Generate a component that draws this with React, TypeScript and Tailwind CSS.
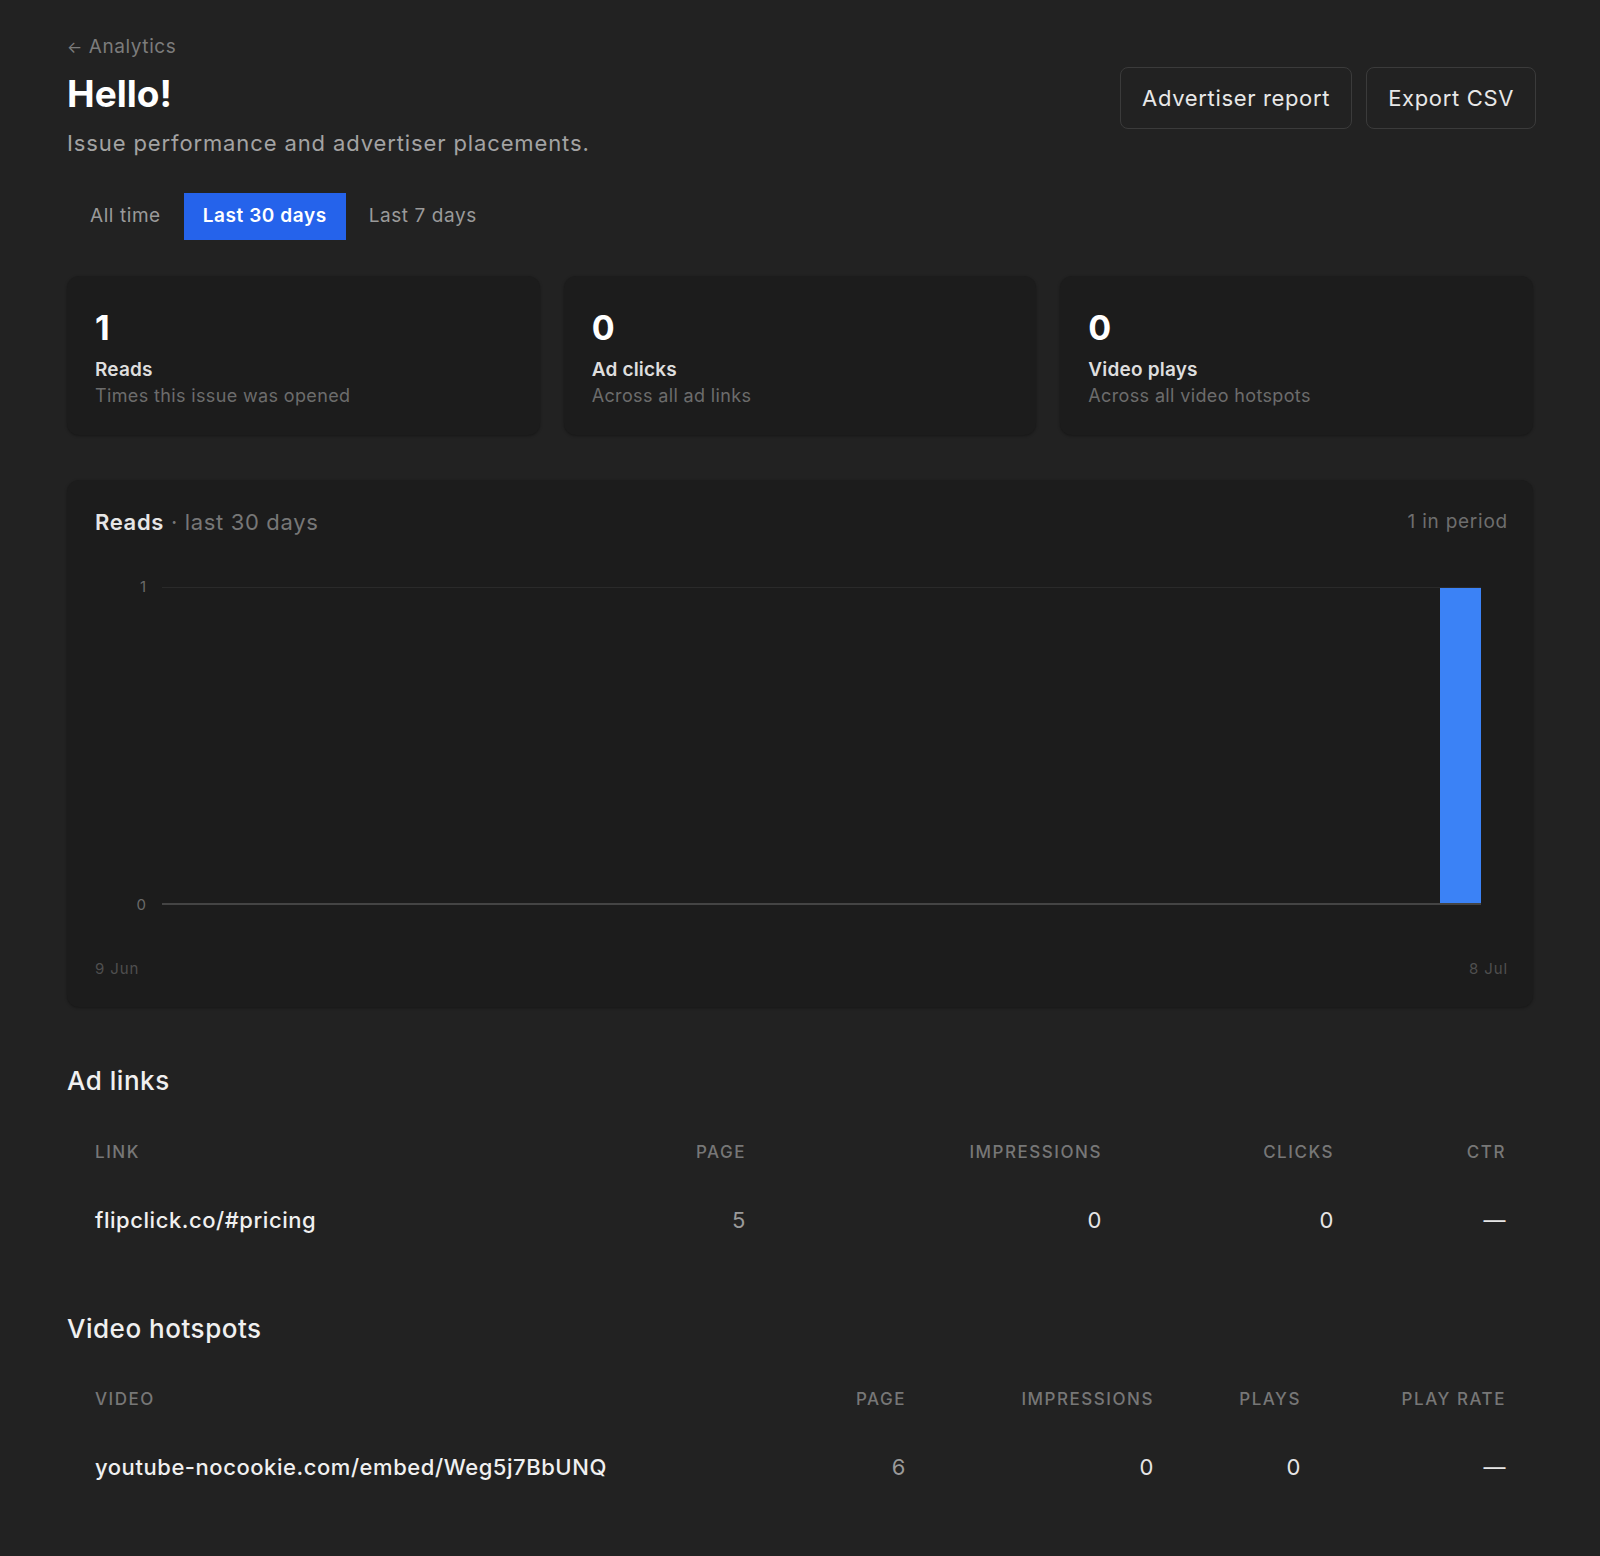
import React, { useState } from 'react';

const font = { fontFamily: 'Inter, "Noto Sans", sans-serif' };

const tabs = ['All time', 'Last 30 days', 'Last 7 days'];

const stats = [
  { value: '1', label: 'Reads', hint: 'Times this issue was opened' },
  { value: '0', label: 'Ad clicks', hint: 'Across all ad links' },
  { value: '0', label: 'Video plays', hint: 'Across all video hotspots' },
];

// 30 days of reads, only the last one has a hit
const reads = Array.from({ length: 30 }, (_, i) => (i === 29 ? 1 : 0));

const App: React.FC = () => {
  const [tab, setTab] = useState(1);
  const max = Math.max(...reads, 1);

  return (
    <div className="min-h-screen bg-[#222222] text-[#ededed]" style={font}>
      <div className="px-[67px] pt-[35px] pb-[76px]">
        {/* Header */}
        <div className="flex items-start justify-between">
          <div>
            <div className="flex items-center gap-[6px] text-[19px] leading-6 tracking-[0.03em] text-[#7c7c7c]">
              <span className="text-[16px]">←</span>
              <span>Analytics</span>
            </div>
            <h1 className="mt-[13px] text-[37px] leading-[44px] font-bold text-white">Hello!</h1>
            <p className="mt-[13px] text-[22px] leading-7 text-[#a3a3a3] tracking-[0.04em]">
              Issue performance and advertiser placements.
            </p>
          </div>
          <div className="mt-[32px] -mr-[3px] flex gap-[14px]">
            <button className="h-[62px] px-[21px] rounded-lg border border-[#3b3b3b] text-[22px] tracking-[0.03em] text-[#e8e8e8]">
              Advertiser report
            </button>
            <button className="h-[62px] px-[21px] rounded-lg border border-[#3b3b3b] text-[22px] tracking-[0.03em] text-[#e8e8e8]">
              Export CSV
            </button>
          </div>
        </div>

        {/* Range tabs */}
        <div className="mt-9 flex gap-1 pl-1">
          {tabs.map((t, i) => (
            <button
              key={t}
              onClick={() => setTab(i)}
              className={`h-[47px] px-[19px] text-[19px] tracking-[0.03em] ${
                i === tab ? 'bg-[#2563eb] text-white font-semibold' : 'text-[#9a9a9a]'
              }`}
            >
              {t}
            </button>
          ))}
        </div>

        {/* Stat cards */}
        <div className="mt-9 grid grid-cols-3 gap-6">
          {stats.map((s) => (
            <div key={s.label} className="h-[159px] rounded-xl bg-[#1c1c1c] px-7 pt-8 shadow-[0_1px_3px_rgba(0,0,0,0.35)]">
              <div className="text-[34px] leading-[40px] font-bold text-white">{s.value}</div>
              <div className="mt-[10px] text-[19px] leading-6 font-semibold tracking-[0.01em] text-[#dedede]">{s.label}</div>
              <div className="mt-[2px] text-[18px] leading-6 tracking-[0.02em] text-[#6c6c6c]">{s.hint}</div>
            </div>
          ))}
        </div>

        {/* Reads chart */}
        <div className="mt-[45px] rounded-xl bg-[#1c1c1c] pl-7 pr-[25px] pt-7 pb-7 shadow-[0_1px_3px_rgba(0,0,0,0.35)]">
          <div className="flex items-center justify-between">
            <div className="text-[22px] leading-7 tracking-[0.03em]">
              <span className="font-semibold text-[#e6e6e6]">Reads</span>
              <span className="text-[#777777]"> · last 30 days</span>
            </div>
            <div className="text-[19px] tracking-[0.04em] text-[#6e6e6e]">1 in period</div>
          </div>

          <div className="mt-[50px] flex">
            <div className="w-[67px] h-[318px] pr-4 flex flex-col justify-between text-right text-[15px] leading-5 text-[#6a6a6a]">
              <span className="-mt-[10px]">1</span>
              <span className="-mb-[10px]">0</span>
            </div>
            <div className="flex-1 mr-[27px] h-[318px] border-t border-[#2a2a2a] border-b-2 border-b-[#444444] flex items-end gap-[3px]">
              {reads.map((r, i) => (
                <div key={i} className="flex-1 h-full flex items-end">
                  <div className="w-full bg-[#3b82f6]" style={{ height: `${(r / max) * 100}%` }} />
                </div>
              ))}
            </div>
          </div>

          <div className="mt-[54px] flex justify-between text-[15px] leading-5 tracking-[0.06em] text-[#4f4f4f]">
            <span>9 Jun</span>
            <span>8 Jul</span>
          </div>
        </div>

        {/* Ad links */}
        <h2 className="mt-[58px] text-[26px] leading-8 font-medium tracking-[0.02em] text-[#f0f0f0]">Ad links</h2>
        <div className="px-7">
          <div className="mt-[43px] grid grid-cols-[551px_100px_356px_232px_172px] text-[17px] leading-6 font-medium tracking-[0.09em] text-[#777777]">
            <span>LINK</span>
            <span className="text-right">PAGE</span>
            <span className="text-right">IMPRESSIONS</span>
            <span className="text-right">CLICKS</span>
            <span className="text-right">CTR</span>
          </div>
          <div className="mt-[42px] grid grid-cols-[551px_100px_356px_232px_172px] text-[22px] leading-7 tracking-[0.025em]">
            <span className="font-medium text-[#f0f0f0]">flipclick.co/#pricing</span>
            <span className="text-right text-[#9a9a9a]">5</span>
            <span className="text-right text-[#e6e6e6]">0</span>
            <span className="text-right text-[#e6e6e6]">0</span>
            <span className="text-right text-[#e6e6e6]">—</span>
          </div>
        </div>

        {/* Video hotspots */}
        <h2 className="mt-[79px] text-[26px] leading-8 font-medium tracking-[0.02em] text-[#f0f0f0]">Video hotspots</h2>
        <div className="px-7">
          <div className="mt-[42px] grid grid-cols-[711px_100px_248px_147px_205px] text-[17px] leading-6 font-medium tracking-[0.09em] text-[#777777]">
            <span>VIDEO</span>
            <span className="text-right">PAGE</span>
            <span className="text-right">IMPRESSIONS</span>
            <span className="text-right">PLAYS</span>
            <span className="text-right">PLAY RATE</span>
          </div>
          <div className="mt-[42px] grid grid-cols-[711px_100px_248px_147px_205px] text-[22px] leading-7 tracking-[0.025em]">
            <span className="font-medium text-[#f0f0f0]">youtube-nocookie.com/embed/Weg5j7BbUNQ</span>
            <span className="text-right text-[#9a9a9a]">6</span>
            <span className="text-right text-[#e6e6e6]">0</span>
            <span className="text-right text-[#e6e6e6]">0</span>
            <span className="text-right text-[#e6e6e6]">—</span>
          </div>
        </div>
      </div>
    </div>
  );
};

export default App;
